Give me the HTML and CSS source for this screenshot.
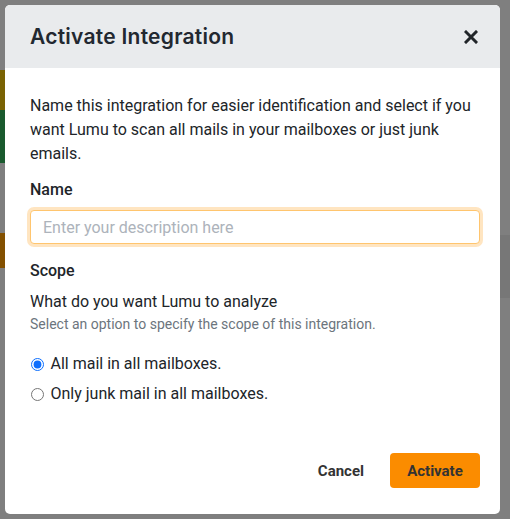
FILE: index.html
```html
<!DOCTYPE html>
<html lang="en">
<head>
<meta charset="utf-8">
<title>Activate Integration</title>
<link rel="stylesheet" href="styles.css">
</head>
<body>
<div class="backdrop">
  <div class="bg-olive"></div>
  <div class="bg-green"></div>
  <div class="bg-brown"></div>
  <div class="bg-band"></div>
</div>
<div class="modal">
  <div class="modal-header">
    <h1 class="modal-title">Activate Integration</h1>
    <button class="close" aria-label="Close">
      <svg width="14" height="14" viewBox="0 0 14 14"><path d="M2 2 L12 12 M12 2 L2 12" stroke="#212529" stroke-width="3" stroke-linecap="square"/></svg>
    </button>
  </div>
  <div class="modal-body">
    <p class="intro">Name this integration for easier identification and select if you want Lumu to scan all mails in your mailboxes or just junk emails.</p>
    <label class="label" for="name">Name</label>
    <input class="input" id="name" type="text" placeholder="Enter your description here">
    <div class="label scope">Scope</div>
    <div class="question">What do you want Lumu to analyze</div>
    <div class="hint">Select an option to specify the scope of this integration.</div>
    <div class="options">
      <label class="option"><input type="radio" name="scope" checked> All mail in all mailboxes.</label>
      <label class="option"><input type="radio" name="scope"> Only junk mail in all mailboxes.</label>
    </div>
  </div>
  <div class="modal-footer">
    <button class="btn btn-link">Cancel</button>
    <button class="btn btn-primary">Activate</button>
  </div>
</div>
</body>
</html>
```
FILE: styles.css
```css
html, body {
  margin: 0;
  padding: 0;
}
body {
  background: #7f7f7f;
  width: 510px;
  height: 519px;
  overflow: hidden;
  font-family: Roboto, "Liberation Sans", sans-serif;
  color: #212529;
  position: relative;
}
.backdrop {
  position: absolute;
  inset: 0;
}
.bg-olive { position: absolute; left: 0; top: 70px; width: 5px; height: 40px; background: #7a6303; }
.bg-green { position: absolute; left: 0; top: 110px; width: 5px; height: 53px; background: #1a5a2e; }
.bg-brown { position: absolute; left: 0; top: 233px; width: 5px; height: 35px; background: #835000; }
.bg-band { position: absolute; right: 0; top: 235px; width: 10px; height: 63px; background: #777; }
.modal {
  position: absolute;
  left: 5px;
  top: 5px;
  width: 495px;
  height: 509px;
  background: #fff;
  border-radius: 5px;
  overflow: hidden;
  display: flex;
  flex-direction: column;
}
.modal-header {
  height: 63px;
  background: #e9ebed;
  display: flex;
  align-items: center;
  justify-content: space-between;
  padding: 0 22px 0 25px;
  box-sizing: border-box;
}
.modal-title {
  margin: 0;
  font-family: Inter, "Open Sans", sans-serif;
  font-weight: 600;
  font-size: 21px;
  color: #222830;
  letter-spacing: 0.25px;
}
.close {
  border: 0;
  background: none;
  padding: 0;
  width: 14px;
  height: 14px;
  display: flex;
}
.modal-body {
  padding: 26px 20px 0 25px;
  flex: 1;
}
.intro {
  margin: 0 0 12px;
  font-size: 16px;
  line-height: 24px;
}
.label {
  display: block;
  font-weight: 500;
  font-size: 16px;
  line-height: 24px;
  margin-bottom: 8px;
}
.input {
  display: block;
  box-sizing: border-box;
  width: 100%;
  height: 34px;
  border: 1px solid #ffc56e;
  border-radius: 4px;
  box-shadow: 0 0 0 3px rgba(255, 170, 50, 0.3);
  padding: 0 12px;
  font-family: Roboto, "Liberation Sans", sans-serif;
  font-size: 16px;
  color: #495057;
  outline: none;
}
.input::placeholder {
  color: #adb3bb;
}
.scope {
  margin-top: 15px;
  margin-bottom: 7px;
}
.question {
  font-size: 16px;
  line-height: 24px;
}
.hint {
  font-size: 14px;
  line-height: 21px;
  color: #6c757d;
  margin-bottom: 17px;
}
.options {
  display: flex;
  flex-direction: column;
  gap: 6px;
}
.option {
  display: flex;
  align-items: center;
  font-size: 16px;
  line-height: 24px;
  gap: 7px;
}
.option input {
  margin: 0 0 0 0.5px;
  width: 13px;
  height: 13px;
  accent-color: #0d6efd;
}
.modal-footer {
  display: flex;
  justify-content: flex-end;
  align-items: center;
  gap: 13px;
  padding: 0 20px 26px 0;
}
.btn {
  font-family: Roboto, "Liberation Sans", sans-serif;
  font-weight: 700;
  font-size: 15px;
  color: #333;
  border: 0;
  border-radius: 4px;
  height: 35px;
  cursor: pointer;
}
.btn-link {
  background: none;
  padding: 0 13px;
}
.btn-primary {
  background: #fb8c00;
  width: 90px;
}
```
